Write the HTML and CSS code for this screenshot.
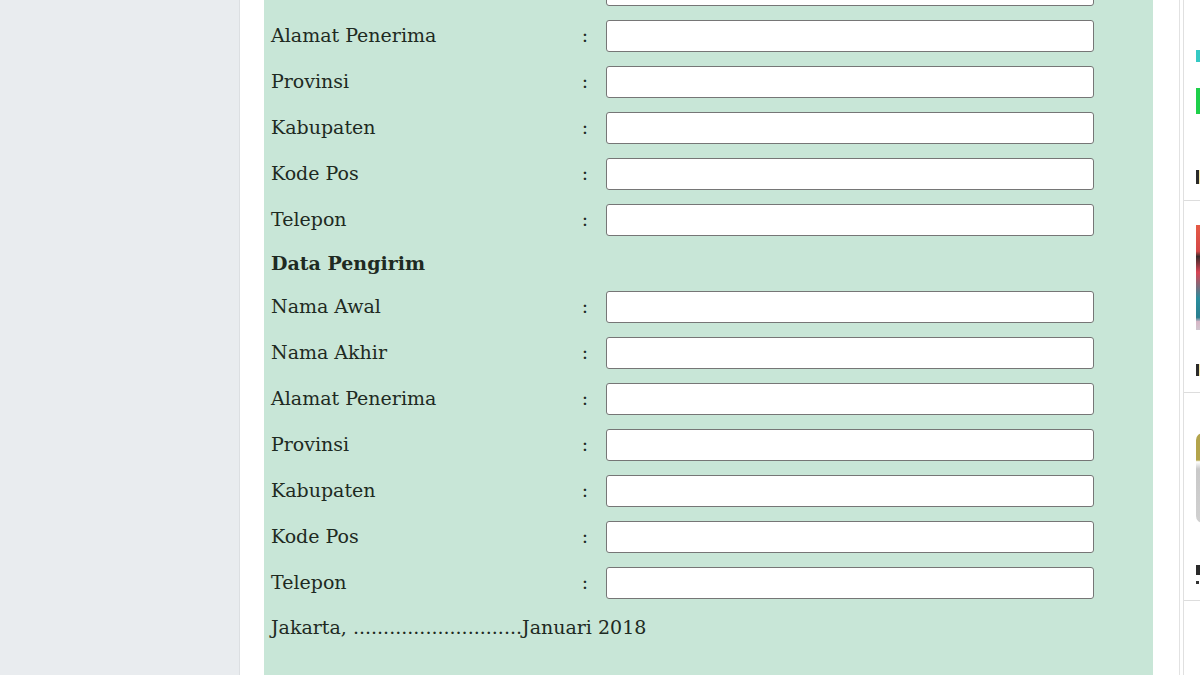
FILE: index.html
```html
<!DOCTYPE html>
<html lang="id">
<head>
<meta charset="utf-8">
<title>Formulir Pengiriman</title>
<link rel="stylesheet" href="styles.css">
</head>
<body>
<div class="page">
  <aside class="left-side"></aside>
  <main class="content">
    <div class="panel">
      <div class="form">
        <div class="label">Nama Akhir</div><div class="colon">:</div><div class="field"><input type="text"></div>
        <div class="label">Alamat Penerima</div><div class="colon">:</div><div class="field"><input type="text"></div>
        <div class="label">Provinsi</div><div class="colon">:</div><div class="field"><input type="text"></div>
        <div class="label">Kabupaten</div><div class="colon">:</div><div class="field"><input type="text"></div>
        <div class="label">Kode Pos</div><div class="colon">:</div><div class="field"><input type="text"></div>
        <div class="label">Telepon</div><div class="colon">:</div><div class="field"><input type="text"></div>
        <div class="heading">Data Pengirim</div>
        <div class="label">Nama Awal</div><div class="colon">:</div><div class="field"><input type="text"></div>
        <div class="label">Nama Akhir</div><div class="colon">:</div><div class="field"><input type="text"></div>
        <div class="label">Alamat Penerima</div><div class="colon">:</div><div class="field"><input type="text"></div>
        <div class="label">Provinsi</div><div class="colon">:</div><div class="field"><input type="text"></div>
        <div class="label">Kabupaten</div><div class="colon">:</div><div class="field"><input type="text"></div>
        <div class="label">Kode Pos</div><div class="colon">:</div><div class="field"><input type="text"></div>
        <div class="label">Telepon</div><div class="colon">:</div><div class="field"><input type="text"></div>
        <div class="footer-line">Jakarta, ............................Januari 2018</div>
      </div>
    </div>
  </main>
  <aside class="right-side">
    <div class="sb-text teal"></div>
    <div class="sb-block green"></div>
    <div class="sb-text dark"></div>
    <div class="sb-rule"></div>
    <div class="sb-image"></div>
    <div class="sb-text dark small"></div>
    <div class="sb-rule"></div>
    <div class="sb-avatar"></div>
    <div class="sb-text dark s"></div>
    <div class="sb-dot"></div>
    <div class="sb-rule"></div>
  </aside>
</div>
</body>
</html>
```

FILE: styles.css
```css
html, body {
  margin: 0;
  padding: 0;
  height: 100%;
  overflow: hidden;
  background: #ffffff;
}

.page {
  display: flex;
  width: 1200px;
  height: 675px;
  overflow: hidden;
  font-family: "DejaVu Serif", "Liberation Serif", serif;
  color: #1e2a22;
}

.left-side {
  flex: 0 0 239px;
  background: #e9ecef;
  border-right: 1px solid #dcdfe2;
}

.content {
  box-sizing: border-box;
  flex: 0 0 940px;
  padding: 0 26px 0 24px;
  border-right: 1px solid #e2e2e2;
}

.panel {
  background: #c8e6d7;
  margin-top: -33px;
  padding: 0 0 40px 7px;
  min-height: 760px;
}

.form {
  display: grid;
  grid-template-columns: 304px 20px 499px;
  grid-auto-rows: auto;
}

.label,
.colon,
.field {
  height: 46px;
  display: flex;
  align-items: center;
}

.label {
  font-size: 19px;
  padding-bottom: 3px;
  box-sizing: border-box;
}

.colon {
  font-size: 19px;
  justify-content: center;
  padding-bottom: 3px;
  box-sizing: border-box;
}

.field {
  padding-left: 11px;
}

.field input {
  display: block;
  box-sizing: border-box;
  width: 488px;
  height: 32px;
  margin: 0;
  border: 1px solid #767676;
  border-radius: 3px;
  background: #ffffff;
  outline: none;
}

.heading {
  grid-column: 1 / 4;
  font-size: 19px;
  font-weight: bold;
  height: 41px;
  line-height: 41px;
}

.footer-line {
  grid-column: 1 / 4;
  font-size: 19px;
  height: 42px;
  line-height: 42px;
}

.right-side {
  flex: 1;
  margin-left: 3px;
  border-left: 1px solid #e0e0e0;
  padding-left: 12px;
  display: flex;
  flex-direction: column;
  overflow: hidden;
}

.sb-text {
  height: 12px;
  width: 10px;
}

.sb-text.teal {
  margin-top: 50px;
  background: #35c9c4;
}

.sb-block.green {
  margin-top: 26px;
  width: 10px;
  height: 26px;
  background: #1ed04a;
}

.sb-text.dark {
  margin-top: 56px;
  width: 3px;
  height: 14px;
  background: #2a2a2a;
  box-shadow: 2px 0 0 #f2e6a8;
}

.sb-rule {
  margin-top: 16px;
  margin-left: -12px;
  height: 1px;
  background: #dddddd;
}

.sb-image {
  margin-top: 24px;
  width: 10px;
  height: 105px;
  background: linear-gradient(#e65a45 0%, #d44848 25%, #3a2a2a 30%, #d94454 45%, #2a8d9d 70%, #2a7f8f 88%, #d8b6c6 92%, #cfc6cf 100%);
}

.sb-text.dark.small {
  margin-top: 34px;
  height: 12px;
}

.sb-avatar {
  margin-top: 40px;
  width: 14px;
  height: 90px;
  border-radius: 7px 0 0 7px;
  background: linear-gradient(#b3a44c 0%, #b3a44c 30%, #ffffff 32%, #c9c9c9 40%, #d0d0d0 100%);
}

.sb-text.dark.s {
  margin-top: 42px;
  height: 10px;
  width: 6px;
  box-shadow: none;
}

.sb-dot {
  margin-top: 6px;
  width: 3px;
  height: 3px;
  background: #333333;
}
```
